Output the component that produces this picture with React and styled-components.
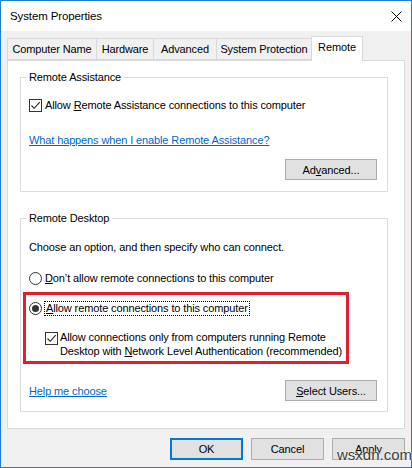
import React from "react";
import styled, { createGlobalStyle } from "styled-components";

const GlobalStyle = createGlobalStyle`
  html, body { margin: 0; padding: 0; background: #fff; }
  * { box-sizing: border-box; }
`;

const Window = styled.div`
  position: relative;
  width: 412px;
  height: 468px;
  border: 1px solid #1a7fd4;
  background: #f0f0f0;
  display: flex;
  flex-direction: column;
  font-family: "Liberation Sans", Arial, sans-serif;
  font-size: 11px;
  letter-spacing: -0.12px;
  color: #000;
`;

const TitleBar = styled.div`
  height: 30px;
  background: #fff;
  display: flex;
  align-items: center;
  justify-content: space-between;
  padding: 0 9px 0 9px;
  font-size: 11.5px;
`;

const Body = styled.div`
  flex: 1;
  padding: 5px 6px 0 6px;
  display: flex;
  flex-direction: column;
`;

const TabStrip = styled.div`
  display: flex;
  align-items: flex-end;
  height: 24px;
  position: relative;
  z-index: 1;
`;

const Tab = styled.div`
  width: ${(p) => p.$w}px;
  height: ${(p) => (p.$active ? 25 : 22)}px;
  margin-left: ${(p) => (p.$first ? 0 : -1)}px;
  margin-bottom: ${(p) => (p.$active ? -1 : 0)}px;
  border: 1px solid #d9d9d9;
  border-bottom: ${(p) => (p.$active ? "none" : "1px solid #d9d9d9")};
  background: ${(p) => (p.$active ? "#fff" : "#f0f0f0")};
  display: flex;
  align-items: ${(p) => (p.$active ? "flex-start" : "center")};
  padding-top: ${(p) => (p.$active ? 4 : 0)}px;
  justify-content: center;
  white-space: nowrap;
`;

const Panel = styled.div`
  height: 369px;
  border: 1px solid #d9d9d9;
  background: #fff;
  padding: 0 16px 0 12px;
`;

const Group = styled.fieldset`
  margin: ${(p) => p.$top}px 0 0 0;
  padding: 0 0 ${(p) => p.$bottom}px 8px;
  border: 1px solid #dcdcdc;
  min-width: 0;
`;

const Legend = styled.legend`
  margin-left: -3px;
  padding: 0 3px;
  line-height: 14px;
`;

const Row = styled.div`
  display: flex;
  align-items: center;
  gap: 3px;
  height: 16px;
  margin-top: ${(p) => p.$top || 0}px;
  white-space: nowrap;
`;

const Text = styled.div`
  line-height: 16px;
  margin-top: ${(p) => p.$top || 0}px;
`;

const Link = styled.a`
  display: block;
  width: fit-content;
  color: #0066cc;
  text-decoration: underline;
  line-height: 16px;
  margin-top: ${(p) => p.$top || 0}px;
  cursor: pointer;
`;

const Mn = styled.span`
  text-decoration: underline;
`;

const Box = styled.span`
  width: 13px;
  height: 13px;
  flex: none;
  border: 1px solid #333;
  background: #fff;
  display: flex;
  align-items: center;
  justify-content: center;
  margin-top: ${(p) => p.$top || 0}px;
`;

const Radio = styled.span`
  width: 13px;
  height: 13px;
  flex: none;
  border: 1px solid #333;
  border-radius: 50%;
  background: #fff;
  display: flex;
  align-items: center;
  justify-content: center;

  &::after {
    content: "";
    display: ${(p) => (p.$on ? "block" : "none")};
    width: 7px;
    height: 7px;
    border-radius: 50%;
    background: #333;
  }
`;

const Focused = styled.span`
  outline: 1px dotted #000;
  outline-offset: 0;
  padding: 0 1px;
  line-height: 13px;
`;

const ButtonRow = styled.div`
  display: flex;
  align-items: center;
  justify-content: ${(p) => (p.$split ? "space-between" : "flex-end")};
  padding-right: 10px;
  margin-top: ${(p) => p.$top || 0}px;
`;

const Button = styled.button`
  width: ${(p) => p.$w || 92}px;
  height: ${(p) => p.$h || 21}px;
  background: #e1e1e1;
  border: 1px solid ${(p) => (p.$default ? "#0078d7" : "#adadad")};
  box-shadow: ${(p) => (p.$default ? "inset 0 0 0 1px #0078d7" : "none")};
  font: inherit;
  letter-spacing: inherit;
  color: #000;
  padding: 0;
`;

const Highlight = styled.div`
  margin: 6px 0 0 -6px;
  width: 326px;
  border: 3px solid #e0202e;
  padding: 5px 0 3px 3px;
`;

const SubOption = styled.div`
  display: flex;
  align-items: flex-start;
  gap: 2px;
  margin: 14px 0 0 16px;
  line-height: 14px;
`;

const Footer = styled.div`
  display: flex;
  justify-content: flex-end;
  gap: 8px;
  margin-top: 9px;
`;

const Watermark = styled.div`
  position: absolute;
  left: 336px;
  top: 445px;
  font-size: 15px;
  letter-spacing: 0;
  color: #3a3a3a;
  text-shadow: 0 0 2px #fff, 0 0 2px #fff;
`;

const Check = () => (
  <svg width="11" height="11" viewBox="0 0 11 11">
    <path d="M1.5 5.5 L4.2 8.3 L9.8 2.2" fill="none" stroke="#222" strokeWidth="1.1" />
  </svg>
);

const CloseX = () => (
  <svg width="11" height="11" viewBox="0 0 11 11">
    <path d="M0.5 0.5 L10.5 10.5 M10.5 0.5 L0.5 10.5" stroke="#000" strokeWidth="1" />
  </svg>
);

const tabs = [
  { label: "Computer Name", w: 90 },
  { label: "Hardware", w: 58 },
  { label: "Advanced", w: 64 },
  { label: "System Protection", w: 96 },
  { label: "Remote", w: 52, active: true },
];

export default function App() {
  return (
    <>
      <GlobalStyle />
      <Window>
        <TitleBar>
          <span>System Properties</span>
          <CloseX />
        </TitleBar>
        <Body>
          <TabStrip>
            {tabs.map((t, i) => (
              <Tab key={t.label} $w={t.w} $first={i === 0} $active={t.active}>
                {t.label}
              </Tab>
            ))}
          </TabStrip>
          <Panel>
            <Group $top={9} $bottom={11}>
              <Legend>Remote Assistance</Legend>
              <Row $top={13}>
                <Box>
                  <Check />
                </Box>
                <span>
                  Allow <Mn>R</Mn>emote Assistance connections to this computer
                </span>
              </Row>
              <Link $top={19}>What happens when I enable Remote Assistance?</Link>
              <ButtonRow $top={11}>
                <Button>
                  Ad<Mn>v</Mn>anced...
                </Button>
              </ButtonRow>
            </Group>

            <Group $top={19} $bottom={10}>
              <Legend>Remote Desktop</Legend>
              <Text $top={14}>Choose an option, and then specify who can connect.</Text>
              <Row $top={15}>
                <Radio />
                <span>
                  <Mn>D</Mn>on’t allow remote connections to this computer
                </span>
              </Row>
              <Highlight>
                <Row>
                  <Radio $on />
                  <Focused>
                    <Mn>A</Mn>llow remote connections to this computer
                  </Focused>
                </Row>
                <SubOption>
                  <Box $top={2}>
                    <Check />
                  </Box>
                  <span>
                    Allow connections only from computers running Remote
                    <br />
                    Desktop with <Mn>N</Mn>etwork Level Authentication (recommended)
                  </span>
                </SubOption>
              </Highlight>
              <ButtonRow $split $top={16}>
                <Link>Help me choose</Link>
                <Button>
                  <Mn>S</Mn>elect Users...
                </Button>
              </ButtonRow>
            </Group>
          </Panel>
          <Footer>
            <Button $w={73} $h={22} $default>
              OK
            </Button>
            <Button $w={73} $h={22}>
              Cancel
            </Button>
            <Button $w={73} $h={22}>
              <Mn>A</Mn>pply
            </Button>
          </Footer>
        </Body>
        <Watermark>wsxdn.com</Watermark>
      </Window>
    </>
  );
}
